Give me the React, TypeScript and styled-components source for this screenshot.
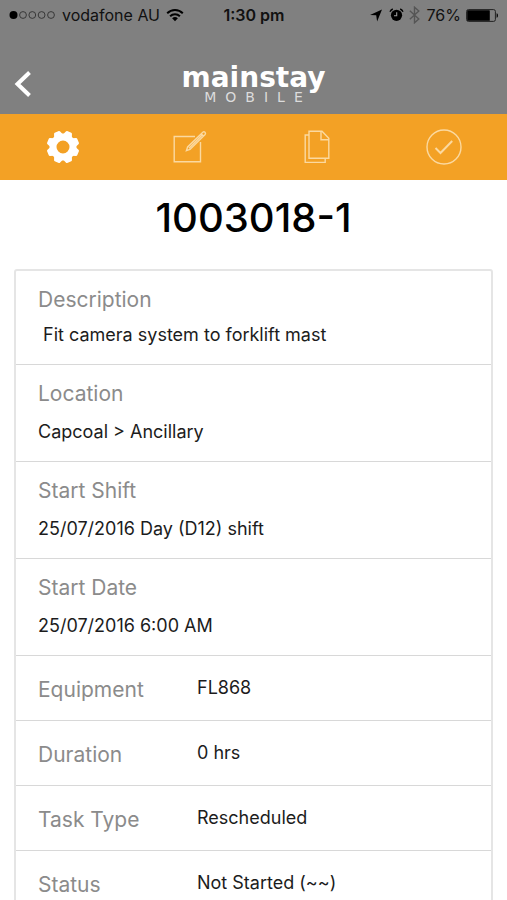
import React from "react";
import styled, { createGlobalStyle } from "styled-components";

const GlobalStyle = createGlobalStyle`
  *, *::before, *::after { box-sizing: border-box; }
  body {
    margin: 0;
    background: #fff;
    color: #1c1c1c;
    font-family: Inter, "Liberation Sans", sans-serif;
  }
`;

const Page = styled.div`
  height: 100vh;
  overflow: hidden;
`;

const Header = styled.header`
  background: #808080;
`;

const StatusBar = styled.div`
  display: grid;
  grid-template-columns: 1fr auto 1fr;
  align-items: center;
  height: 30px;
  padding: 0 8px 0 9px;
  color: #111;
  font-size: 16px;
  line-height: 20px;
`;

const StatusGroup = styled.div<{ $end?: boolean }>`
  display: flex;
  align-items: center;
  justify-content: ${(p) => (p.$end ? "flex-end" : "flex-start")};
  gap: ${(p) => (p.$end ? "5px" : "6px")};
  white-space: nowrap;
  svg { flex: none; }
`;

const BatteryLevel = styled.span`
  padding-left: 2px;
`;

const Clock = styled.time`
  font-weight: 600;
`;

const NavBar = styled.div`
  display: grid;
  grid-template-columns: 48px 1fr 48px;
  align-items: center;
  height: 84px;
  padding-top: 24px;
`;

const BackButton = styled.button`
  display: flex;
  align-items: center;
  height: 48px;
  padding: 0 0 0 14px;
  border: 0;
  background: none;
  cursor: pointer;
`;

const Brand = styled.div`
  display: flex;
  flex-direction: column;
  align-items: center;
  padding-top: 4px;
  color: #fff;
  font-family: "DejaVu Sans", sans-serif;
`;

const BrandName = styled.span`
  font-size: 28px;
  font-weight: 700;
  line-height: 22px;
`;

const BrandSub = styled.span`
  padding-left: 9px;
  color: #dcdcdc;
  font-size: 14px;
  line-height: 16px;
  letter-spacing: 9px;
`;

const Tabs = styled.nav`
  display: grid;
  grid-template-columns: repeat(4, 1fr);
  height: 66px;
  background: #f3a125;
`;

const Tab = styled.button<{ $active?: boolean }>`
  display: flex;
  align-items: center;
  justify-content: center;
  padding: 0;
  border: 0;
  background: none;
  color: ${(p) => (p.$active ? "#fff" : "#fbd9a0")};
  cursor: pointer;
`;

const Title = styled.h1`
  margin: 0;
  padding: 13px 16px 27px;
  color: #000;
  font-size: 40px;
  font-weight: 500;
  line-height: 49px;
  text-align: center;
`;

const Details = styled.dl`
  margin: 0 14px;
  border: 2px solid #e5e5e5;
  border-radius: 3px;
`;

const Field = styled.div<{ $inline?: boolean }>`
  display: ${(p) => (p.$inline ? "grid" : "block")};
  grid-template-columns: 159px 1fr;
  align-items: start;
  padding: ${(p) => (p.$inline ? "20px 22px 16px" : "15px 22px 16px")};
  & + & { border-top: 1px solid #d8d8d8; }
`;

const Label = styled.dt`
  color: #8b8b8b;
  font-size: 21px;
  line-height: 28px;
`;

const Value = styled.dd<{ $inline?: boolean; $note?: boolean }>`
  margin: ${(p) => (p.$inline ? "0" : p.$note ? "8px 0 0" : "11px 0 0")};
  font-size: 18px;
  line-height: ${(p) => (p.$inline ? "24px" : "26px")};
  white-space: pre-wrap;
`;

const SignalIcon = () => (
  <svg width="47" height="10" viewBox="0 0 47 10" role="img" aria-label="Signal strength">
    <circle cx="4.5" cy="5" r="4" fill="#000" />
    {[14, 23.3, 32.6, 42].map((x) => (
      <circle key={x} cx={x} cy="5" r="3.4" fill="none" stroke="#303030" strokeWidth="0.9" />
    ))}
  </svg>
);

const WifiIcon = () => (
  <svg width="18" height="14" viewBox="0 0 18 14" fill="none" stroke="#000" strokeWidth="2" role="img" aria-label="Wi-Fi">
    <path d="M1.2 5.2a11 11 0 0 1 15.6 0" />
    <path d="M4.1 8.3a7 7 0 0 1 9.8 0" />
    <path d="M9 13.2 6.1 10.3a4.2 4.2 0 0 1 5.8 0z" fill="#000" stroke="none" />
  </svg>
);

const LocationIcon = () => (
  <svg width="14" height="13" viewBox="0 0 14 13" role="img" aria-label="Location">
    <path d="M12 .5 7.1 12.5 6.2 6.3 0 6z" fill="#000" />
  </svg>
);

const AlarmIcon = () => (
  <svg width="15" height="14" viewBox="0 0 15 14" role="img" aria-label="Alarm">
    <circle cx="7.5" cy="7.3" r="5.6" fill="#000" />
    <path d="M1 3.8A5 5 0 0 1 3.8 1M14 3.8A5 5 0 0 0 11.2 1" fill="none" stroke="#000" strokeWidth="1.4" />
    <path d="M7.7 4.2v3.5H5" fill="none" stroke="#9a9a9a" strokeWidth="1.1" />
  </svg>
);

const BluetoothIcon = () => (
  <svg width="11" height="18" viewBox="0 0 11 18" fill="none" stroke="#555" strokeWidth="1.4" role="img" aria-label="Bluetooth">
    <path d="m.8 4.8 9 8.2-4.3 3.8V1.2L9.8 5l-9 8.2" />
  </svg>
);

const BatteryIcon = () => (
  <svg width="33" height="13" viewBox="0 0 33 13" role="img" aria-label="Battery">
    <rect x="0.6" y="0.6" width="28.8" height="11.8" rx="1.8" fill="none" stroke="#222" strokeWidth="1" />
    <rect x="1.2" y="1.2" width="22.6" height="10.6" rx="0.6" fill="#000" />
    <path d="M30.6 4.2c1.8.4 1.8 4.2 0 4.6z" fill="#000" />
  </svg>
);

const BackIcon = () => (
  <svg width="18" height="28" viewBox="0 0 18 28" fill="none" stroke="#fff" strokeWidth="4">
    <path d="M15.5 2.5 3.5 14l12 11.5" />
  </svg>
);

const TOOTH_ANGLES = [22.5, 67.5, 112.5, 157.5, 202.5, 247.5, 292.5, 337.5];

const GearIcon = () => (
  <svg width="34" height="34" viewBox="-17 -17 34 34" fill="none" stroke="currentColor">
    <circle r="10" strokeWidth="7" />
    {TOOTH_ANGLES.map((angle) => (
      <path
        key={angle}
        d="M-4.8-11.5-3.3-15.4Q-3-16.3-2.2-16.3H2.2Q3-16.3 3.3-15.4L4.8-11.5z"
        fill="currentColor"
        stroke="none"
        transform={`rotate(${angle})`}
      />
    ))}
  </svg>
);

const EditIcon = () => (
  <svg width="34" height="34" viewBox="0 0 34 34" fill="none" stroke="currentColor" strokeWidth="1.4">
    <path d="M22 6.5H1.2v25.3h26.3V12" />
    <path d="m13.4 20.6 1.2-3.6L29.8 2.2q1.2-.9 2.2.1 1 1 .1 2.2L17 19.4zM28.2 3.8l2.3 2.3M16 18.2 29.2 5" />
  </svg>
);

const DocumentsIcon = () => (
  <svg width="26" height="34" viewBox="0 0 26 34" fill="none" stroke="currentColor" strokeWidth="1.4">
    <path d="M5 1.2h13l6.8 7v20H5zM17 1.2v8.6h7.8" />
    <path d="M5 5H1.2v27.4h20v-4.2" />
  </svg>
);

const CompleteIcon = () => (
  <svg width="36" height="36" viewBox="0 0 36 36" fill="none" stroke="currentColor">
    <circle cx="18" cy="18" r="17" strokeWidth="1.4" />
    <path d="m9.5 19 5 5L26.2 12" strokeWidth="2" />
  </svg>
);

const TABS = [
  { name: "Details", icon: <GearIcon />, active: true },
  { name: "Edit", icon: <EditIcon /> },
  { name: "Documents", icon: <DocumentsIcon /> },
  { name: "Complete", icon: <CompleteIcon /> },
];

const FIELDS = [
  { label: "Description", value: " Fit camera system to forklift mast", note: true },
  { label: "Location", value: "Capcoal > Ancillary" },
  { label: "Start Shift", value: "25/07/2016 Day (D12) shift" },
  { label: "Start Date", value: "25/07/2016 6:00 AM" },
  { label: "Equipment", value: "FL868", inline: true },
  { label: "Duration", value: "0 hrs", inline: true },
  { label: "Task Type", value: "Rescheduled", inline: true },
  { label: "Status", value: "Not Started (~~)", inline: true },
];

export default function App() {
  return (
    <Page>
      <GlobalStyle />
      <Header>
        <StatusBar>
          <StatusGroup>
            <SignalIcon />
            <span>vodafone AU</span>
            <WifiIcon />
          </StatusGroup>
          <Clock>1:30 pm</Clock>
          <StatusGroup $end>
            <LocationIcon />
            <AlarmIcon />
            <BluetoothIcon />
            <BatteryLevel>76%</BatteryLevel>
            <BatteryIcon />
          </StatusGroup>
        </StatusBar>
        <NavBar>
          <BackButton type="button" aria-label="Back">
            <BackIcon />
          </BackButton>
          <Brand>
            <BrandName>mainstay</BrandName>
            <BrandSub>MOBILE</BrandSub>
          </Brand>
        </NavBar>
      </Header>
      <Tabs>
        {TABS.map((tab) => (
          <Tab key={tab.name} type="button" aria-label={tab.name} $active={tab.active}>
            {tab.icon}
          </Tab>
        ))}
      </Tabs>
      <main>
        <Title>1003018-1</Title>
        <Details>
          {FIELDS.map((field) => (
            <Field key={field.label} $inline={field.inline}>
              <Label>{field.label}</Label>
              <Value $inline={field.inline} $note={field.note}>
                {field.value}
              </Value>
            </Field>
          ))}
        </Details>
      </main>
    </Page>
  );
}
